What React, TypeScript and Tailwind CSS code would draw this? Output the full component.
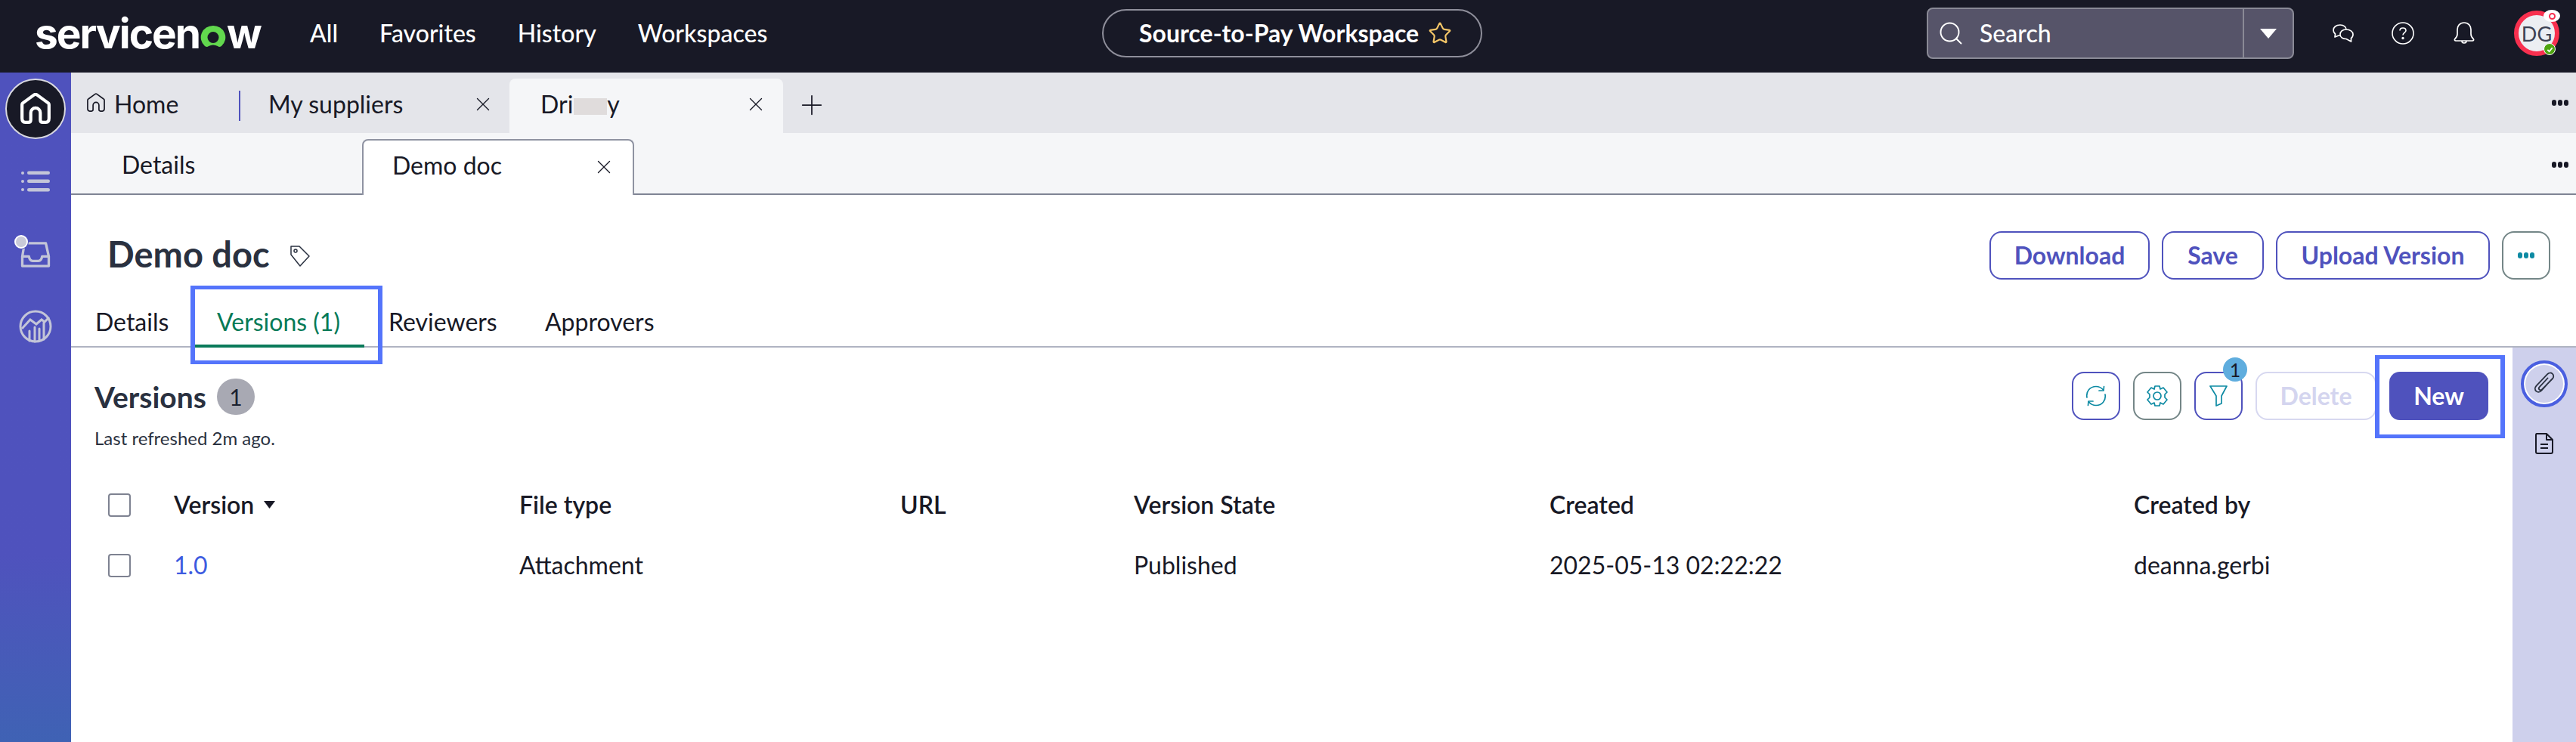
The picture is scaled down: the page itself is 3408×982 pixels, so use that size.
import { Plus, Search, Star, X } from "lucide-react";

const lato = "[font-family:Lato,sans-serif]";

function HomeIcon({ className, width = 4 }: { className: string; width?: number }) {
  return (
    <svg viewBox="0 0 40 40" fill="none" stroke="currentColor" strokeWidth={width} strokeLinejoin="round" className={className}>
      <path d="M3 15 Q3 13 5 12 L18 2.5 Q20 1 22 2.5 L35 12 Q37 13 37 15 V32 Q37 37 33 37 H29 Q26 37 26 34 V25 A6 6 0 0 0 14 25 V34 Q14 37 11 37 H7 Q3 37 3 32 Z" />
    </svg>
  );
}

function Dots({ className }: { className: string }) {
  return (
    <span className={`flex gap-[2px] ${className}`}>
      <span className="w-[6px] h-[8px] rounded-full bg-current" />
      <span className="w-[6px] h-[8px] rounded-full bg-current" />
      <span className="w-[6px] h-[8px] rounded-full bg-current" />
    </span>
  );
}

function TopBar() {
  return (
    <div className="relative h-[96px] shrink-0 bg-[#181926] flex items-center text-white">
      {/* logo */}
      <div className="ml-[46px] w-[296px] shrink-0 -mt-[8px] flex items-end h-[60px] [font-family:Inter,sans-serif] font-bold text-[55px] leading-[60px] tracking-[-2px]">
        <span>servicen</span>
        <svg viewBox="0 0 36 32" className="shrink-0 w-[36px] h-[32px] mb-[9px]">
          <path fillRule="evenodd" fill="#62d84e" d="M18 1 A16 15.5 0 0 1 29 28 Q26 30 24 28 Q18 25 12 28 Q10 30 7 28 A16 15.5 0 0 1 18 1 Z M18 9 A7.5 7.5 0 1 0 18 24 A7.5 7.5 0 1 0 18 9 Z" />
        </svg>
        <span>w</span>
      </div>
      <nav className={`ml-[68px] w-[604px] shrink-0 flex gap-[55px] text-[32px] ${lato} font-medium -mt-[9px]`}>
        <span>All</span>
        <span>Favorites</span>
        <span>History</span>
        <span>Workspaces</span>
      </nav>
      {/* workspace pill */}
      <div className="ml-[444px] w-[503px] h-[64px] -mt-[8px] rounded-[32px] border-2 border-[#8e8e9a] flex items-center pl-[47px]">
        <span className={`${lato} font-bold text-[32px] whitespace-nowrap`}>Source-to-Pay Workspace</span>
        <Star className="ml-[12px] w-[32px] h-[32px] text-[#f6c768]" strokeWidth={1.6} />
      </div>
      {/* search */}
      <div className="ml-[588px] w-[486px] h-[68px] -mt-[8px] rounded-[8px] border-2 border-[#8a8a96] bg-[#565469] flex items-center">
        <Search className="ml-[12px] w-[36px] h-[36px]" strokeWidth={1.3} />
        <span className={`ml-[20px] flex-1 text-[32px] ${lato} font-medium`}>Search</span>
        <div className="w-[66px] h-full border-l-2 border-[#8a8a96] flex items-center justify-center">
          <svg viewBox="0 0 22 13" className="w-[22px] h-[13px]" fill="#fff"><path d="M0 0 H22 L11 13 Z" /></svg>
        </div>
      </div>
      {/* right icons */}
      <svg viewBox="0 0 28 24" fill="none" stroke="#fff" strokeWidth="1.7" strokeLinejoin="round" className="ml-[51px] -mt-[8px] w-[28px] h-[24px]">
        <path d="M10 1 C4.5 1 1 4 1 8 C1 10.5 2.3 12 3.5 13 L3 17 L8 15 L11 15" />
        <path d="M10 1 C15 1 18 4 18 7" />
        <path d="M18 7 C13 7 10 10 10 13.5 C10 17 13 19.5 18 19.5 L24.5 23 L24.5 18.5 C26 17.5 27 15.5 27 13.5 C27 10 23 7 18 7 Z" />
      </svg>
      <svg viewBox="0 0 30 30" fill="none" stroke="#fff" strokeWidth="1.6" className="ml-[50px] -mt-[8px] w-[30px] h-[30px]">
        <circle cx="15" cy="15" r="14" />
        <path d="M11 11.5 C11 9 13 8 15 8 C17 8 19 9.2 19 11.5 C19 14 15 14.5 15 17.5" />
        <circle cx="15" cy="21.5" r="0.9" fill="#fff" />
      </svg>
      <svg viewBox="0 0 28 30" fill="none" stroke="#fff" strokeWidth="1.7" strokeLinejoin="round" className="ml-[52px] -mt-[8px] w-[28px] h-[30px]">
        <path d="M14 1 C8 1 5 5.5 5 10 V16 C5 19 3.5 21 1.8 22.5 C0.8 23.6 1.5 25 3 25 H25 C26.5 25 27.2 23.6 26.2 22.5 C24.5 21 23 19 23 16 V10 C23 5.5 20 1 14 1 Z" />
        <path d="M11 25 C11 29 17 29 17 25" />
      </svg>
      {/* avatar */}
      <div className="relative ml-[52px] -mt-[8px] w-[60px] h-[60px] rounded-full border-[6px] border-[#f8304f] bg-[#eceef2] flex items-center justify-center">
        <span className={`${lato} text-[#3d4254] text-[27px] leading-none`}>DG</span>
        <span className="absolute -top-[7px] -right-[7px] w-[22px] h-[16px] rounded-[50%] bg-white flex items-center justify-center">
          <span className="w-[9px] h-[9px] rounded-full border-2 border-[#f8304f]" />
        </span>
        <span className="absolute -bottom-[5px] right-[-1px] w-[16px] h-[16px] rounded-full bg-[#4fa510] border border-white flex items-center justify-center">
          <svg viewBox="0 0 10 10" className="w-[9px] h-[9px]" fill="none" stroke="#fff" strokeWidth="2"><path d="M1.5 5.5 L4 8 L8.5 2.5" /></svg>
        </span>
      </div>
    </div>
  );
}

function SideRail() {
  return (
    <div className="w-[94px] shrink-0 bg-gradient-to-b from-[#4f52bd] from-[72%] to-[#3f62b4] flex flex-col items-center text-[#c3c5d8]">
      <div className="mt-[8px] w-[80px] h-[80px] rounded-full bg-[#181926] border-2 border-[#d8d8e0] flex items-center justify-center text-white">
        <HomeIcon className="w-[42px] h-[42px]" />
      </div>
      <svg viewBox="0 0 38 28" className="mt-[42px] w-[38px] h-[28px]" fill="currentColor">
        <circle cx="2" cy="3" r="2" /><rect x="8" y="0.5" width="30" height="4.5" rx="2.2" />
        <circle cx="2" cy="14" r="2" /><rect x="8" y="11.5" width="30" height="4.5" rx="2.2" />
        <circle cx="2" cy="25" r="2" /><rect x="8" y="23" width="30" height="4.5" rx="2.2" />
      </svg>
      <div className="relative mt-[66px] w-[40px] h-[35px]">
        <svg viewBox="0 0 40 36" className="w-[40px] h-[35px]" fill="none" stroke="currentColor" strokeWidth="3.4" strokeLinejoin="round">
          <path d="M5 2 H34 L38 20 V33 H2 V20 Z" />
          <path d="M2 20 H11 C12 25 14 26 16 26 H24 C26 26 28 25 29 20 H38" />
        </svg>
        <span className="absolute -top-[9px] -left-[8px] w-[18px] h-[18px] rounded-full bg-[#c9cad8] border-2 border-white shadow-[0_0_0_1px_#4f52bd]" />
      </div>
      <svg viewBox="0 0 44 44" className="mt-[55px] w-[44px] h-[44px]" fill="none" stroke="currentColor" strokeWidth="3">
        <circle cx="22" cy="22" r="20" />
        <path d="M4 25 L15 13 L23 19 L30 13 L34 16 L40 10" />
        <path d="M14 41 V28 M21 42 V23 M27 41 V25 M33 39 V17" strokeLinecap="round" />
      </svg>
    </div>
  );
}

function TabBar() {
  return (
    <div className={`h-[80px] shrink-0 bg-[#e4e5ea] flex items-end ${lato} text-[32px] text-[#181926]`}>
      <div className="h-[80px] flex items-center pl-[20px] w-[222px]">
        <HomeIcon className="w-[26px] h-[26px]" width={2.6} />
        <span className="ml-[11px] mt-[4px]">Home</span>
      </div>
      <div className="w-[2px] h-[40px] bg-[#4f52bd] mb-[16px]" />
      <div className="h-[80px] w-[356px] flex items-center pl-[37px] relative">
        <span className="mt-[4px]">My suppliers</span>
        <X className="absolute left-[306px] top-[27px] w-[30px] h-[30px]" strokeWidth={1.1} />
      </div>
      <div className="relative h-[72px] w-[362px] rounded-t-[8px] bg-[#f5f6f8] flex items-center pl-[41px]">
        <span className="-mt-[4px]">Dri</span>
        <span className="ml-[1px] mt-[2px] w-[44px] h-[22px] bg-[#e0dcdc]" />
        <span className="-mt-[4px]">y</span>
        <X className="absolute left-[311px] top-[19px] w-[30px] h-[30px]" strokeWidth={1.1} />
      </div>
      <Plus className="ml-[17px] mb-[16px] w-[42px] h-[42px]" strokeWidth={1} />
      <Dots className="ml-auto mr-[10px] mb-[36px] text-[#181926]" />
    </div>
  );
}

function SubTabBar() {
  return (
    <div className={`h-[82px] shrink-0 bg-[#f5f6f8] border-b-2 border-[#7f8494] flex items-end ${lato} text-[32px] text-[#181926]`}>
      <div className="w-[385px] h-[80px] flex items-center pl-[67px]">
        <span className="mt-[4px]">Details</span>
      </div>
      <div className="relative w-[360px] h-[74px] -mb-[2px] bg-white border-2 border-b-0 border-[#8f93a2] rounded-t-[8px] flex items-center pl-[38px]">
        <span className="-mt-[6px]">Demo doc</span>
        <X className="absolute left-[303px] top-[20px] w-[30px] h-[30px]" strokeWidth={1.1} />
      </div>
      <Dots className="ml-auto mr-[10px] mb-[34px] text-[#181926]" />
    </div>
  );
}

function OutlineButton({ label, width }: { label: string; width: string }) {
  return (
    <button className={`${width} h-[64px] rounded-[16px] border-2 border-[#4f52bd] bg-white text-[#4f52bd] text-[32px] font-bold ${lato}`}>
      {label}
    </button>
  );
}

function IconButton({ children, gray }: { children: React.ReactNode; gray?: boolean }) {
  return (
    <button className={`w-[64px] h-[64px] rounded-[16px] border-2 bg-white flex items-center justify-center text-[#0d8aa3] ${gray ? "border-[#748687]" : "border-[#4f52bd]"}`}>
      {children}
    </button>
  );
}

function Checkbox() {
  return <span className="block w-[30px] h-[31px] rounded-[4px] border-2 border-[#7e8291] bg-white" />;
}

const colClass = "grid grid-cols-[87px_457px_504px_309px_550px_773px_1fr] items-center";

function VersionsList() {
  return (
    <div className={`flex-1 relative ${lato} text-[#181926]`}>
      <div className="flex items-start pl-[31px] pr-[32px] pt-[32px]">
        <div className="flex-1">
          <div className="flex items-center h-[48px] mt-[9px]">
            <h2 className="text-[39px] font-bold text-[#2a3140] leading-none">Versions</h2>
            <span className="ml-[14px] w-[50px] h-[48px] rounded-full bg-[#a8a9b3] flex items-center justify-center text-[30px] text-[#1b2130]">1</span>
          </div>
          <p className="mt-[17px] text-[24px] leading-[28px] text-[#2a3140]">Last refreshed 2m ago.</p>
        </div>
        <div className="flex items-center gap-[17px]">
          <IconButton>
            <svg viewBox="0 0 28 28" className="w-[28px] h-[28px]" fill="none" stroke="currentColor" strokeWidth="1.7" strokeLinejoin="round" strokeLinecap="round">
              <path d="M2 16 C0.5 8 6 1.5 14 1.5 C18 1.5 21 3 23.5 6" />
              <path d="M18 7 L24 7 L24.5 1.5" />
              <path d="M26 12 C27.5 20 22 26.5 14 26.5 C10 26.5 7 25 4.5 22" />
              <path d="M10 21 L4 21 L3.5 26.5" />
            </svg>
          </IconButton>
          <IconButton gray>
            <svg viewBox="0 0 28 28" className="w-[28px] h-[28px]" fill="none" stroke="currentColor" strokeWidth="1.7" strokeLinejoin="round">
              <path d="M11 1 H17 L18 5 L22 3 L27 9 L24 12 V16 L27 19 L22 25 L18 23 L17 27 H11 L10 23 L6 25 L1 19 L4 16 V12 L1 9 L6 3 L10 5 Z" />
              <circle cx="14" cy="14" r="5" />
            </svg>
          </IconButton>
          <div className="relative">
            <IconButton>
              <svg viewBox="0 0 24 28" className="w-[24px] h-[28px]" fill="none" stroke="currentColor" strokeWidth="1.7" strokeLinejoin="round">
                <path d="M1 1 H23 L16 14 V24 L9 27 V14 Z" />
              </svg>
            </IconButton>
            <span className="absolute -top-[19px] left-[38px] w-[32px] h-[32px] rounded-full bg-[#5fadde] flex items-center justify-center text-[25px] leading-none">1</span>
          </div>
          <button className="w-[160px] h-[64px] rounded-[16px] border-2 border-[#d7d8f0] text-[#d4d5ef] text-[32px] font-bold">Delete</button>
          <button className="w-[131px] h-[64px] rounded-[14px] bg-[#4f52bd] text-white text-[32px] font-bold">New</button>
        </div>
      </div>
      <div className="mt-[34px] pl-[49px]">
        <div className={`${colClass} h-[80px] text-[32px] font-semibold`}>
          <Checkbox />
          <span className="flex items-center">
            Version
            <svg viewBox="0 0 15 10" className="ml-[13px] w-[15px] h-[10px]" fill="#181926"><path d="M0 0 H15 L7.5 10 Z" /></svg>
          </span>
          <span>File type</span>
          <span>URL</span>
          <span>Version State</span>
          <span>Created</span>
          <span>Created by</span>
        </div>
        <div className={`${colClass} h-[80px] text-[32px]`}>
          <Checkbox />
          <span className="text-[#3d5be0]">1.0</span>
          <span>Attachment</span>
          <span />
          <span>Published</span>
          <span>2025-05-13 02:22:22</span>
          <span>deanna.gerbi</span>
        </div>
      </div>
    </div>
  );
}

function RightPanel() {
  return (
    <div className="w-[84px] shrink-0 bg-[#ced0ec] flex flex-col items-center">
      <div className="mt-[17px] w-[62px] h-[62px] rounded-full border-[4px] border-[#4a5fe0] flex items-center justify-center shadow-[inset_0_0_0_2px_#fff]">
        <svg viewBox="0 0 24 24" className="w-[36px] h-[36px]" fill="none" stroke="#2a3140" strokeWidth="1.2" strokeLinecap="round" strokeLinejoin="round">
          <path d="M18.5 8 L9.5 18 C8 19.6 6 19.5 4.8 18.4 C3.6 17.2 3.6 15.2 5 13.7 L14.8 3.4 C16 2.1 18 2 19.2 3.1 C20.5 4.3 20.5 6.2 19.2 7.5 L10 17 C9.3 17.7 8.3 17.7 7.7 17.1 C7.1 16.5 7.1 15.5 7.8 14.8 L15 7" />
        </svg>
      </div>
      <svg viewBox="0 0 24 28" className="mt-[34px] w-[24px] h-[28px]" fill="none" stroke="#181926" strokeWidth="2" strokeLinejoin="round">
        <path d="M2 1 H15 L23 9 V25 Q23 27 21 27 H3 Q1 27 1 25 V3 Q1 1 2 1 Z" />
        <path d="M15 1 V9 H23" />
        <path d="M7 15 H17 M7 20 H17" />
      </svg>
    </div>
  );
}

export default function App() {
  return (
    <div className="relative w-[3408px] h-[982px] flex flex-col overflow-hidden bg-white">
      <TopBar />
      <div className="flex-1 flex min-h-0">
        <SideRail />
        <div className="flex-1 flex flex-col min-w-0">
          <TabBar />
          <SubTabBar />
          {/* record header */}
          <div className={`relative h-[120px] shrink-0 flex items-start ${lato}`}>
            <h1 className="ml-[48px] mt-[50px] text-[47px] leading-[56px] font-bold text-[#2a3140]">Demo doc</h1>
            <svg viewBox="0 0 28 30" className="ml-[26px] mt-[66px] w-[28px] h-[30px]" fill="none" stroke="#2a3140" strokeWidth="1.5" strokeLinejoin="round">
              <path d="M2 2 H13 L26 15 L14 28 L2 13 Z" />
              <circle cx="8" cy="8" r="2" />
            </svg>
            <div className="ml-auto mr-[34px] mt-[48px] flex gap-[16px]">
              <OutlineButton label="Download" width="w-[212px]" />
              <OutlineButton label="Save" width="w-[135px]" />
              <OutlineButton label="Upload Version" width="w-[283px]" />
              <button className="w-[64px] h-[64px] rounded-[16px] border-2 border-[#748687] bg-white flex items-center justify-center">
                <Dots className="text-[#0d8aa3]" />
              </button>
            </div>
          </div>
          {/* record tabs */}
          <div className={`h-[82px] shrink-0 border-b-2 border-[#b0b4c2] flex items-stretch ${lato} text-[32px] text-[#181926]`}>
            <span className="ml-[32px] w-[132px] pt-[24px]">Details</span>
            <span className="w-[224px] -mb-[2px] border-b-4 border-[#0a7a5a] pl-[29px] pt-[24px] text-[#067a57]">Versions (1)</span>
            <span className="ml-[32px] w-[207px] pt-[24px]">Reviewers</span>
            <span className="pt-[24px]">Approvers</span>
          </div>
          <div className="flex-1 flex min-h-0">
            <VersionsList />
            <RightPanel />
          </div>
        </div>
      </div>
      {/* annotation rectangles drawn over the page */}
      <div className="absolute left-[252px] top-[378px] w-[254px] h-[104px] border-x-[6px] border-y-[5px] border-[#5474fb]" />
      <div className="absolute left-[3142px] top-[470px] w-[172px] h-[110px] border-x-[6px] border-y-[5px] border-[#5474fb]" />
    </div>
  );
}
